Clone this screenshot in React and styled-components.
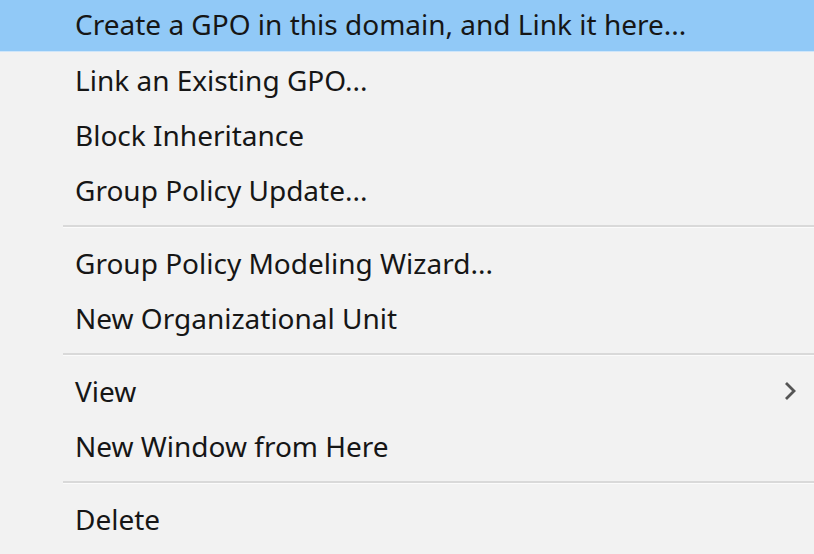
import styled, { createGlobalStyle } from "styled-components";

const Global = createGlobalStyle`
  html, body {
    margin: 0;
    padding: 0;
    background: #f2f2f2;
    overflow: hidden;
  }
`;

const Menu = styled.div`
  width: 814px;
  height: 554px;
  margin-top: -3px;
  background: #f2f2f2;
  font-family: "Noto Sans", "Open Sans", sans-serif;
  font-size: 28px;
  color: #161616;
`;

const Item = styled.div`
  height: 55px;
  display: flex;
  align-items: center;
  padding-left: 75px;
  padding-right: 17px;
  box-sizing: border-box;
  background: ${({ $active }) => ($active ? "#91c9f7" : "transparent")};
  border-bottom: ${({ $active }) => ($active ? "1px solid #cfe6fa" : "none")};
`;

const Label = styled.span`
  flex: 1;
  white-space: nowrap;
`;

const Separator = styled.div`
  height: 18px;
  display: flex;
  flex-direction: column;
  justify-content: center;
  padding-left: 63px;

  &::before {
    content: "";
    display: block;
    height: 2px;
    background: #d9d9d9;
  }
  &::after {
    content: "";
    display: block;
    height: 1px;
    background: #fbfbfb;
  }
`;

const Chevron = () => (
  <svg width="14" height="22" viewBox="0 0 14 22">
    <polyline
      points="3,3 11,11 3,19"
      fill="none"
      stroke="#555555"
      strokeWidth="2.8"
    />
  </svg>
);

const groups = [
  [
    "Create a GPO in this domain, and Link it here...",
    "Link an Existing GPO...",
    "Block Inheritance",
    "Group Policy Update...",
  ],
  ["Group Policy Modeling Wizard...", "New Organizational Unit"],
  ["View", "New Window from Here"],
  ["Delete"],
];

export default function App() {
  return (
    <>
      <Global />
      <Menu>
        {groups.map((group, gi) => (
          <div key={gi}>
            {gi > 0 && <Separator />}
            {group.map((label, i) => (
              <Item key={label} $active={gi === 0 && i === 0}>
                <Label>{label}</Label>
                {label === "View" && <Chevron />}
              </Item>
            ))}
          </div>
        ))}
      </Menu>
    </>
  );
}
